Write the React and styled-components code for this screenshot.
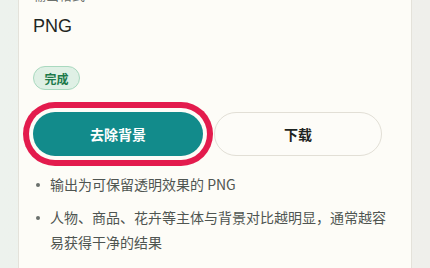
import React from "react";
import styled, { createGlobalStyle } from "styled-components";

const Global = createGlobalStyle`
  html, body { margin: 0; padding: 0; }
  body {
    width: 430px;
    height: 268px;
    overflow: hidden;
    background: linear-gradient(90deg, #edf2ed 0%, #eff0ec 60%, #efefeb 100%);
    font-family: "Noto Sans CJK SC", "Noto Sans", sans-serif;
  }
`;

const Page = styled.div`
  padding: 0 18px;
  box-sizing: border-box;
  width: 430px;
`;

const Card = styled.section`
  margin-top: -15px;
  background: #fdfcf7;
  border: 1px solid #e4e2da;
  border-top: none;
  padding: 0 14px 20px;
  min-height: 300px;
  box-sizing: border-box;
`;

const Label = styled.div`
  font-size: 13px;
  line-height: 20px;
  color: #6b706c;
`;

const Value = styled.div`
  margin-top: 8px;
  font-family: "Liberation Sans", "Noto Sans CJK SC", sans-serif;
  font-size: 18px;
  line-height: 26px;
  color: #1f2623;
`;

const Badge = styled.span`
  display: inline-flex;
  align-items: center;
  justify-content: center;
  margin-top: 27px;
  width: 47px;
  height: 24px;
  box-sizing: border-box;
  border-radius: 12px;
  background: #dff0e5;
  border: 1px solid #a9d9bf;
  color: #1d7a4b;
  font-size: 12px;
  font-weight: 700;
`;

const Actions = styled.div`
  display: flex;
  gap: 11px;
  margin-top: 22px;
`;

const Button = styled.button`
  width: ${(p) => (p.$primary ? "170px" : "168px")};
  height: 44px;
  border-radius: 22px;
  font-family: "Noto Sans CJK SC", sans-serif;
  font-size: 14px;
  font-weight: 700;
  cursor: pointer;
  border: ${(p) => (p.$primary ? "none" : "1px solid #e2dfd6")};
  background: ${(p) => (p.$primary ? "#128b8b" : "#fdfcf8")};
  color: ${(p) => (p.$primary ? "#ffffff" : "#1e2421")};
  box-shadow: ${(p) =>
    p.$focused ? "0 0 0 4px #fdfcf7, 0 0 0 10px #e31b4d" : "none"};
`;

const List = styled.ul`
  margin: 16px 0 0;
  padding: 0 0 0 17px;
  list-style: none;
  display: flex;
  flex-direction: column;
  gap: 8px;
`;

const Item = styled.li`
  position: relative;
  font-size: 14px;
  line-height: 25px;
  color: #4f5551;
  &::before {
    content: "";
    position: absolute;
    left: -14px;
    top: 11px;
    width: 4px;
    height: 4px;
    border-radius: 50%;
    background: #6a706c;
  }
`;

export default function App() {
  return (
    <Page>
      <Global />
      <Card>
        <Label>输出格式</Label>
        <Value>PNG</Value>
        <Badge>完成</Badge>
        <Actions>
          <Button $primary $focused>去除背景</Button>
          <Button>下载</Button>
        </Actions>
        <List>
          <Item>输出为可保留透明效果的 PNG</Item>
          <Item>人物、商品、花卉等主体与背景对比越明显，通常越容易获得干净的结果</Item>
        </List>
      </Card>
    </Page>
  );
}
